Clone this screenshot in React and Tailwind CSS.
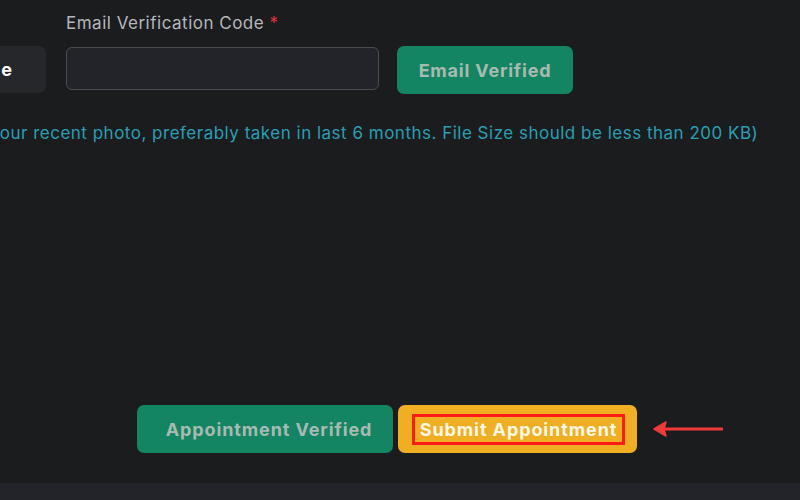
export default function App() {
  return (
    <div className="w-[800px] h-[500px] bg-[#1b1c1e] flex flex-col overflow-hidden relative" style={{ fontFamily: "Inter, 'Open Sans', sans-serif" }}>
      <div className="flex-1 flex flex-col">
        <div className="flex pt-[12px]">
          <div className="w-[46px] shrink-0" />
          <div className="ml-[20px] flex flex-col">
            <div className="text-[17px] tracking-[0.5px] text-[#b4b7bb] leading-[22px]">
              Email Verification Code <span className="text-[#e0353d]">*</span>
            </div>
          </div>
        </div>
        <div className="flex items-start mt-[12px]">
          <div className="w-[46px] h-[47px] bg-[#26272b] rounded-r-[7px] flex items-center justify-end pr-[34px] text-white font-bold text-[18px]">e</div>
          <div className="ml-[20px] mt-[1px] w-[313px] h-[43px] bg-[#222429] border border-[#4a4d53] rounded-[6px]" />
          <div className="ml-[18px] w-[176px] h-[48px] bg-[#148562] rounded-[7px] flex items-center justify-center text-[#a9bab3] font-bold text-[18px] tracking-[0.8px]">Email Verified</div>
        </div>
        <div className="mt-[28px] ml-[-10px] whitespace-nowrap text-[#2a9fb4] text-[17px] tracking-[0.5px] leading-[22px]">
          your recent photo, preferably taken in last 6 months. File Size should be less than 200 KB)
        </div>
        <div className="flex items-center mt-[261px] ml-[137px]">
          <div className="w-[256px] h-[48px] bg-[#148562] rounded-[7px] flex items-center justify-center pl-[8px] text-[#a9bab3] font-bold text-[18px] tracking-[0.9px]">Appointment Verified</div>
          <div className="ml-[5px] w-[239px] h-[48px] bg-[#f0ae22] rounded-[7px] flex items-center pl-[14px]">
            <div className="w-[213px] h-[31px] border-[3px] border-[#ff1a1a] flex items-center justify-center text-[#fff9e6] font-bold text-[18px] tracking-[0.9px] whitespace-nowrap">Submit Appointment</div>
          </div>
          <svg className="ml-[16px]" width="70" height="20" viewBox="0 0 70 20">
            <line x1="10" y1="10" x2="69" y2="10" stroke="#f03a3a" strokeWidth="3" strokeLinecap="round" />
            <polygon points="1,10 13,3 11,10 13,17" fill="#f03a3a" stroke="#f03a3a" strokeWidth="1.5" strokeLinejoin="round" />
          </svg>
        </div>
      </div>
      <div className="h-[17px] bg-[#222429]" />
    </div>
  );
}
